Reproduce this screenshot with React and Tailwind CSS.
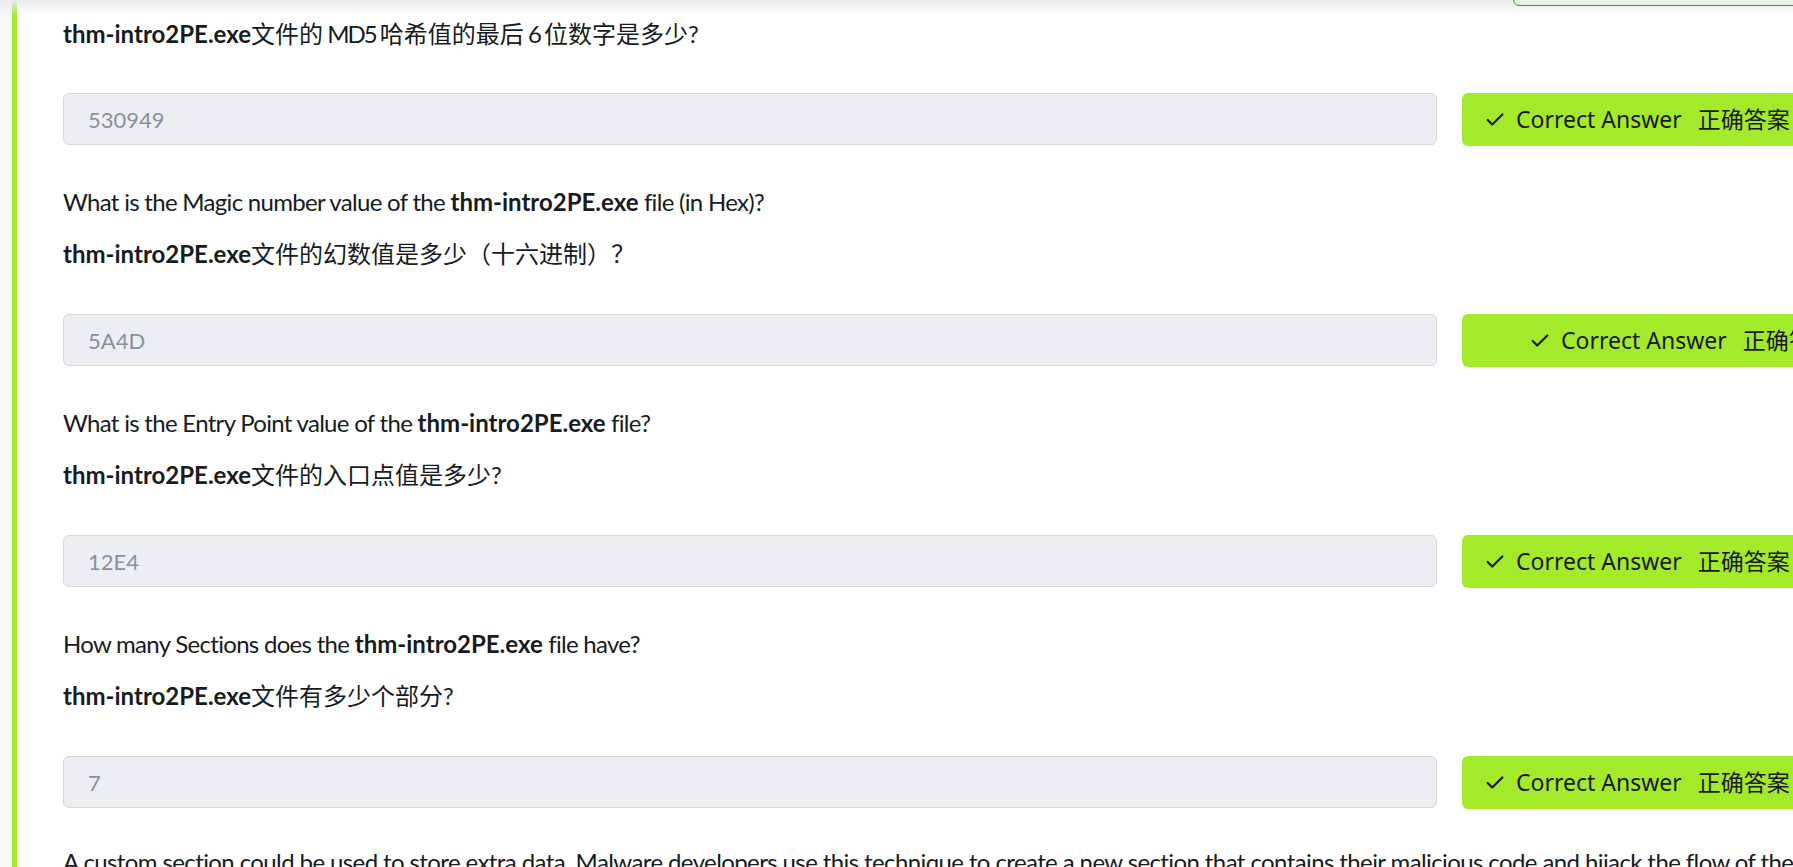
import { Check } from "lucide-react"

const bodyFont = { fontFamily: "Lato, 'Noto Sans CJK SC', sans-serif" }

const FILE = "thm-intro2PE.exe"

const questions = [
  {
    en: null,
    zh: (
      <>
        文件的<span className="tracking-[-2px]"> MD5 </span>哈希值的最后
        <span className="tracking-[-2px]"> 6 </span>位数字是多少?
      </>
    ),
    answer: "530949",
    pad: "pl-[22px]",
  },
  {
    en: ["What is the Magic number value of the ", " file (in Hex)?"],
    zh: "文件的幻数值是多少（十六进制）？",
    answer: "5A4D",
    pad: "pl-[67px]",
  },
  {
    en: ["What is the Entry Point value of the ", " file?"],
    zh: "文件的入口点值是多少?",
    answer: "12E4",
    pad: "pl-[22px]",
  },
  {
    en: ["How many Sections does the ", " file have?"],
    zh: "文件有多少个部分?",
    answer: "7",
    pad: "pl-[22px]",
  },
]

const AnswerRow = ({ answer, pad }) => (
  <div className="flex items-start gap-[25px]">
    <div className="flex h-[52px] w-[1374px] shrink-0 items-center rounded-[6px] border border-[#d4d7dd] bg-[#eceef2] pl-6 text-[22px] text-[#8a919d]">
      {answer}
    </div>
    <div
      className={`flex h-[53px] w-[400px] shrink-0 items-center whitespace-nowrap rounded-[6px] bg-[#a3ea2a] text-[23px] text-[#1b1a1f] ${pad}`}
      style={{ fontFamily: "'Noto Sans', 'Noto Sans CJK SC', sans-serif" }}
    >
      <Check size={22} strokeWidth={2.4} className="shrink-0" />
      <span className="ml-[10px]">Correct Answer</span>
      <span className="ml-[16px]">正确答案</span>
    </div>
  </div>
)

const Question = ({ q, first }) => (
  <div className={first ? "" : "mt-[38px]"}>
    {q.en && (
      <p className="mb-4 text-[24px] leading-[36px]">
        <span className="tracking-[-0.7px]">{q.en[0]}</span>
        <b className="font-bold">{FILE}</b>
        <span className="tracking-[-0.7px]">{q.en[1]}</span>
      </p>
    )}
    <p className="whitespace-nowrap text-[24px] leading-[36px]">
      <b className="font-bold">{FILE}</b>
      {q.zh}
    </p>
    <div className={first ? "mt-[41px]" : "mt-[42px]"}>
      <AnswerRow answer={q.answer} pad={q.pad} />
    </div>
  </div>
)

const App = () => {
  return (
    <div
      className="relative h-[867px] w-full overflow-hidden bg-white text-[#171b21]"
      style={bodyFont}
    >
      <div className="flex h-full">
        <div className="w-3 shrink-0 bg-[#f7f8fa]" />
        <div className="w-[5px] shrink-0 bg-[#a3ea2a]" />
        <div className="w-[1900px] shrink-0 pl-[46px] pt-4">
          {questions.map((q, i) => (
            <Question key={q.answer} q={q} first={i === 0} />
          ))}
          <p className="mt-[35px] whitespace-nowrap text-[24px] leading-[36px] tracking-[-0.6px]">
            A custom section could be used to store extra data. Malware
            developers use this technique to create a new section that contains
            their malicious code and hijack the flow of the program to execute
            that code.
          </p>
        </div>
      </div>

      {/* sticky header shadow */}
      <div className="pointer-events-none absolute left-0 right-0 top-0 h-4 bg-gradient-to-b from-[#ececec] to-white/0" />

      {/* toast peeking at top */}
      <div className="absolute right-[-20px] top-[-20px] h-[26px] w-[300px] rounded-b-[6px] border border-[#3f9a2c] bg-[#e9f4e7]" />
    </div>
  )
}

export default App
